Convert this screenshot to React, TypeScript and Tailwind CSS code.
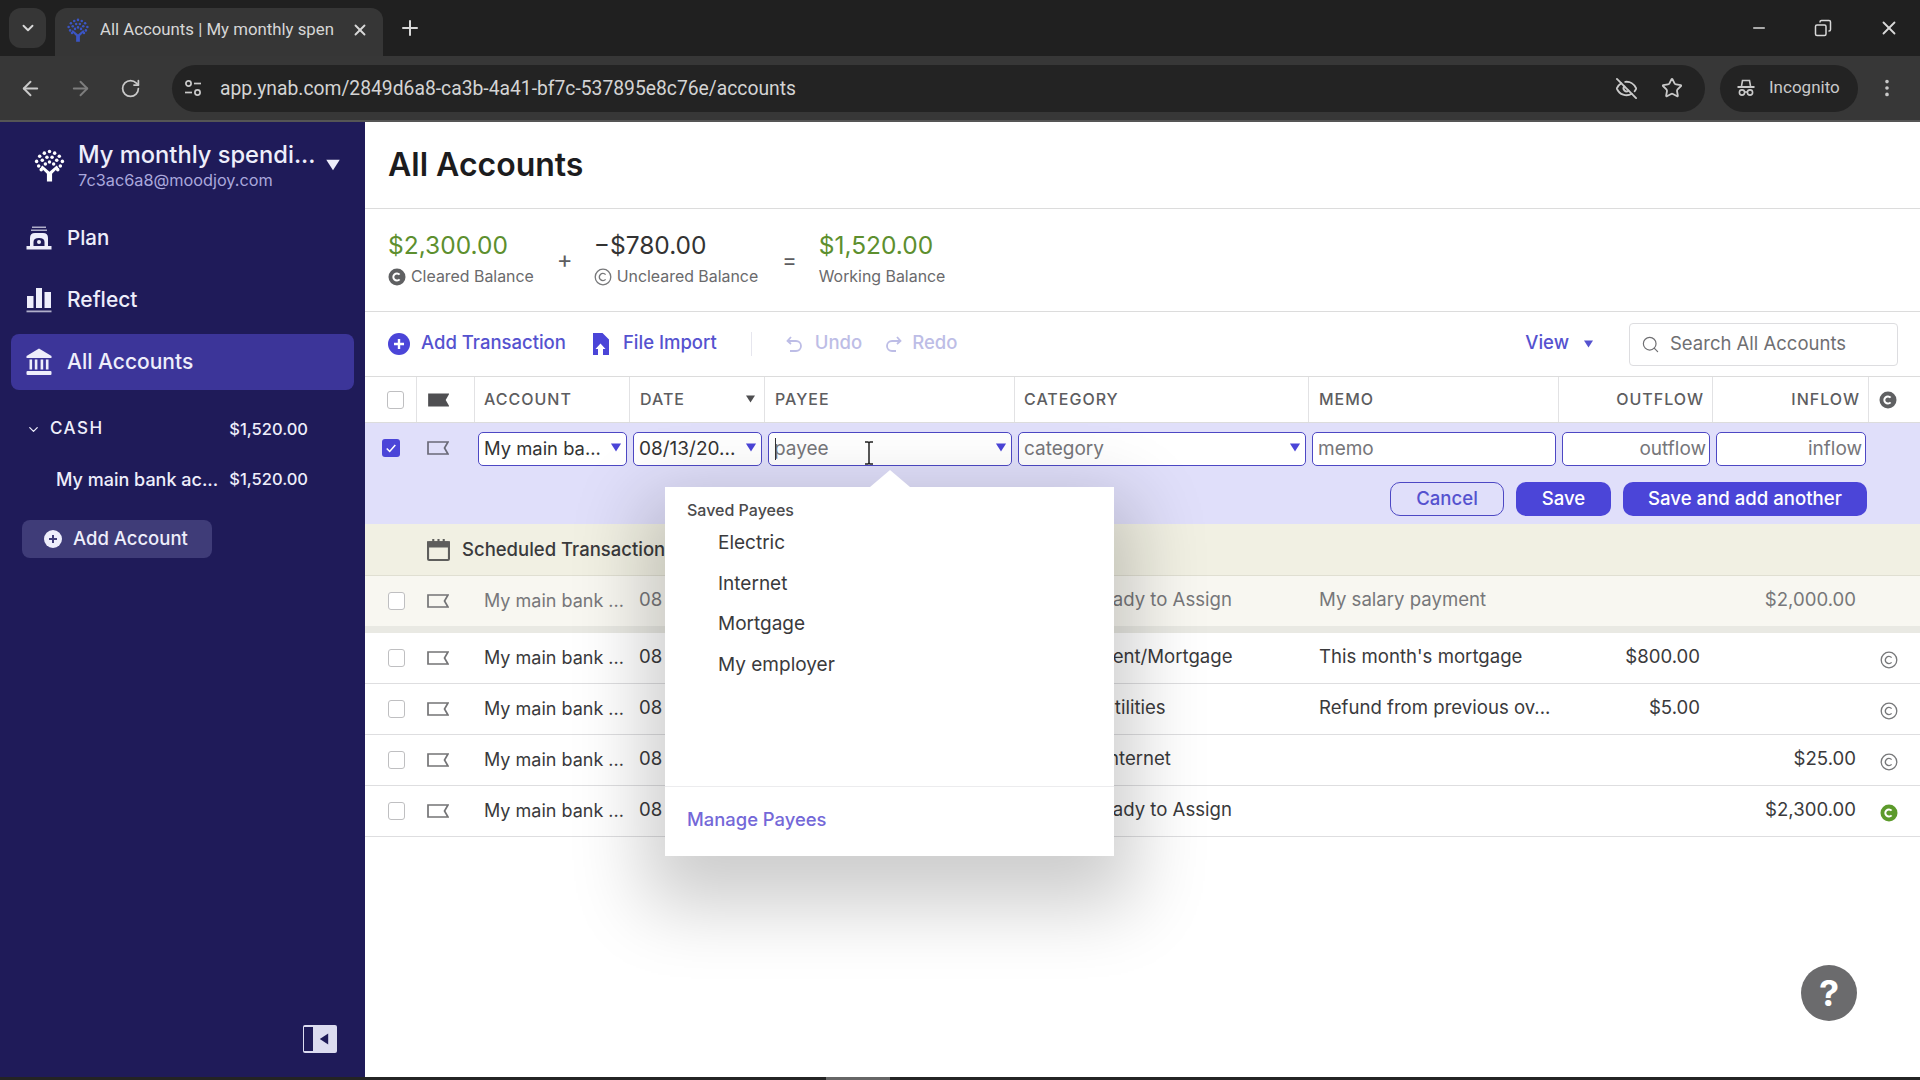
import React from 'react';
import { ArrowLeft, ArrowRight, ChevronDown, Copy, EyeOff, Minus, MoreVertical, Plus, RotateCw, Search, Star, X } from 'lucide-react';

const COLS = 'grid grid-cols-[52px_58px_155px_135px_250px_294px_250px_154px_156px_1fr]';

// tree mark, used in the sidebar and on the tab
function TreeLogo({ className }: { className?: string }) {
    const dots = [
        [16, 2.5], [11, 4], [21, 4], [6.5, 7], [25.5, 7], [13.5, 8], [18.5, 8], [9, 11], [23, 11],
        [3.5, 12], [28.5, 12], [16, 12.5], [12, 14.5], [20, 14.5], [5.5, 16.5], [26.5, 16.5], [8, 20], [24, 20],
    ];
    return (
        <svg viewBox="0 0 32 32" className={className} fill="currentColor">
            {dots.map(([cx, cy]) => (
                <circle key={`${cx}-${cy}`} cx={cx} cy={cy} r="1.7" />
            ))}
            <path d="M9 16 L16 22 L23 16 L24.5 18 L18.5 24 V31.5 H13.5 V24 L7.5 18 Z" />
        </svg>
    );
}

function PlanIcon() {
    return (
        <svg viewBox="0 0 26 24" className="h-6 w-[26px]" fill="currentColor">
            <rect x="6" y="0.5" width="14" height="1.5" opacity=".7" />
            <rect x="5" y="3.5" width="16" height="1.5" opacity=".7" />
            <path d="M4 20 V12 Q4 7 9 7 H17 Q22 7 22 12 V20 H18.5 V16 Q18.5 12 13 12 Q7.5 12 7.5 16 V20 Z" />
            <circle cx="13" cy="16" r="2" />
            <path d="M0.5 20 H25.5 V23.5 H0.5 Z" />
        </svg>
    );
}

function ReflectIcon() {
    return (
        <svg viewBox="0 0 26 26" className="h-[26px] w-[26px]" fill="currentColor">
            <rect x="1" y="9" width="6.5" height="12" />
            <rect x="10" y="1" width="6" height="20" />
            <rect x="18.5" y="5" width="6.5" height="16" />
            <rect x="0.5" y="23.5" width="25" height="1.8" opacity=".7" />
        </svg>
    );
}

function BankIcon() {
    return (
        <svg viewBox="0 0 26 28" className="h-7 w-[26px]" fill="currentColor">
            <path d="M13 0.5 L25.5 8 V10 H0.5 V8 Z" />
            <rect x="3.5" y="11.5" width="2.6" height="10" />
            <rect x="8.8" y="11.5" width="2.6" height="10" />
            <rect x="14.6" y="11.5" width="2.6" height="10" />
            <rect x="19.9" y="11.5" width="2.6" height="10" />
            <rect x="0.5" y="23" width="25" height="4" rx="1" />
        </svg>
    );
}

function IncognitoIcon() {
    return (
        <svg viewBox="0 0 20 20" className="h-5 w-5" fill="none" stroke="currentColor" strokeWidth="1.6">
            <path d="M5.5 8 L6.5 2.5 H13.5 L14.5 8" />
            <path d="M1.5 9 H18.5" strokeWidth="2" />
            <circle cx="6" cy="14.5" r="2.6" />
            <circle cx="14" cy="14.5" r="2.6" />
            <path d="M8.6 14 H11.4" />
        </svg>
    );
}

// site controls chip in the address bar
function SiteControlsIcon() {
    return (
        <svg viewBox="0 0 18 18" className="h-[18px] w-[18px]" fill="none" stroke="currentColor" strokeWidth="1.7">
            <circle cx="4.5" cy="4.5" r="2.6" />
            <path d="M10 4.5 H17" />
            <path d="M1 13.5 H8" />
            <circle cx="13.5" cy="13.5" r="2.6" />
        </svg>
    );
}

function FlagIcon({ filled, className }: { filled?: boolean; className?: string }) {
    return (
        <svg viewBox="0 0 22 14" className={className ?? 'h-[14px] w-[22px]'}>
            <path
                d="M1 1 H21 L17.5 7 L21 13 H1 Z"
                fill={filled ? 'currentColor' : 'none'}
                stroke="currentColor"
                strokeWidth="1.7"
            />
        </svg>
    );
}

function ClearedIcon({ kind }: { kind: 'outline' | 'solid' | 'green' }) {
    const solid = kind !== 'outline';
    const color = kind === 'green' ? 'text-[#5c9a2b]' : kind === 'solid' ? 'text-[#5f6062]' : 'text-[#77787a]';
    return (
        <svg viewBox="0 0 18 18" className={`h-[18px] w-[18px] ${color}`} fill="none">
            <circle cx="9" cy="9" r={solid ? 8.5 : 7.8} fill={solid ? 'currentColor' : 'none'} stroke="currentColor" strokeWidth={solid ? 0 : 1.3} />
            <path
                d="M11.6 6.6 A3.6 3.6 0 1 0 11.6 11.4"
                stroke={solid ? '#fff' : 'currentColor'}
                strokeWidth={solid ? 2 : 1.4}
            />
        </svg>
    );
}

function Caret({ className }: { className: string }) {
    return (
        <svg viewBox="0 0 10 8" className={className} fill="currentColor">
            <path d="M0.5 0.5 H9.5 L5 7.5 Z" />
        </svg>
    );
}

function Checkbox() {
    return <div className="h-[18px] w-[17px] rounded-[3px] border border-[#bfbfc1] bg-white" />;
}

function BrowserChrome() {
    return (
        <>
            <div className="flex h-14 shrink-0 items-start bg-[#202020] pl-[9px] pt-2 text-[#d8d8d8]">
                <div className="flex h-10 w-[37px] items-center justify-center rounded-xl bg-[#363636]">
                    <ChevronDown className="h-[18px] w-[18px]" strokeWidth={2.5} />
                </div>
                <div className="ml-[9px] flex h-12 w-[328px] items-center rounded-t-xl bg-[#363636] pb-[5px] pl-[11px] pr-[14px]">
                    <TreeLogo className="h-6 w-6 text-[#3b55c4]" />
                    <span className="ml-[10px] w-[234px] overflow-hidden whitespace-nowrap text-[16.8px] text-[#d6d6d6] [font-family:Roboto,sans-serif]">
                        All Accounts | My monthly spen
                    </span>
                    <X className="ml-auto h-[18px] w-[18px]" strokeWidth={2.5} />
                </div>
                <Plus className="ml-[15px] mt-[8px] h-6 w-6" strokeWidth={2} />
                <div className="ml-auto flex h-10 items-center gap-[46px] pr-[20px]">
                    <Minus className="h-[18px] w-[18px]" />
                    <Copy className="h-[18px] w-[18px] -scale-x-100" />
                    <X className="h-[22px] w-[22px]" />
                </div>
            </div>
            <div className="flex h-[66px] shrink-0 items-center border-b-2 border-[#555] bg-[#373737] pl-[19px] text-[#c9c9c9]">
                <ArrowLeft className="h-[23px] w-[23px]" />
                <ArrowRight className="ml-[27px] h-[23px] w-[23px] text-[#7d7d7d]" />
                <RotateCw className="ml-[28px] h-[21px] w-[21px]" />
                <div className="ml-[31px] flex h-[47px] w-[1533px] items-center rounded-full bg-[#232323] pl-3 pr-[22px]">
                    <SiteControlsIcon />
                    <span className="ml-[18px] translate-y-px text-[19.3px] text-[#d4d4d4] [font-family:Roboto,sans-serif]">
                        app.ynab.com/2849d6a8-ca3b-4a41-bf7c-537895e8c76e/accounts
                    </span>
                    <EyeOff className="ml-auto h-[23px] w-[23px]" />
                    <Star className="ml-[23px] h-[22px] w-[22px]" />
                </div>
                <div className="ml-[15px] flex h-[47px] w-[138px] items-center gap-[13px] rounded-full bg-[#232323] pl-[16px] text-[17px] [font-family:Roboto,sans-serif]">
                    <IncognitoIcon />
                    Incognito
                </div>
                <MoreVertical className="ml-[18px] h-[22px] w-[22px]" />
            </div>
        </>
    );
}

function Sidebar() {
    return (
        <aside className="flex w-[365px] shrink-0 flex-col bg-[#1f1b59] text-[#eeeefb]">
            <div className="flex h-[88px] items-start pl-[33px] pt-[18px]">
                <TreeLogo className="mt-[9px] h-[33px] w-[33px] text-white" />
                <div className="ml-3 min-w-0">
                    <div className="text-[23.7px] font-medium leading-[30px] whitespace-nowrap">My monthly spendi...</div>
                    <div className="text-[16.3px] leading-5 text-[#aaa8dc]">7c3ac6a8@moodjoy.com</div>
                </div>
                <Caret className="ml-[9px] mt-[19px] h-[12px] w-[18px] text-[#eeeefb]" />
            </div>
            <nav className="flex flex-col">
                <div className="mx-[11px] flex h-[56px] items-center pl-[15px]">
                    <PlanIcon />
                    <span className="ml-[15px] text-[20.5px] font-medium">Plan</span>
                </div>
                <div className="mx-[11px] mt-[6px] flex h-[56px] items-center pl-[15px]">
                    <ReflectIcon />
                    <span className="ml-[15px] text-[21px] font-medium">Reflect</span>
                </div>
                <div className="mx-[11px] mt-[6px] flex h-[56px] items-center rounded-lg bg-[#3c3599] pl-[15px]">
                    <BankIcon />
                    <span className="ml-[15px] text-[21px] font-medium">All Accounts</span>
                </div>
            </nav>
            <div className="mt-[27px] flex h-6 items-center pl-[26px] pr-[57px]">
                <ChevronDown className="h-[15px] w-[15px]" />
                <span className="ml-[9px] text-[17px] font-medium tracking-[1.5px]">CASH</span>
                <span className="ml-auto text-[16.5px] font-medium">$1,520.00</span>
            </div>
            <div className="mt-[26px] flex h-6 items-center pl-[56px] pr-[57px]">
                <span className="text-[18px] font-medium whitespace-nowrap">My main bank ac...</span>
                <span className="ml-auto text-[16.5px] font-medium">$1,520.00</span>
            </div>
            <div className="ml-[22px] mt-[29px] flex h-[38px] w-[190px] items-center rounded-lg bg-[#3f3c78] pl-[22px]">
                <svg viewBox="0 0 18 18" className="h-[18px] w-[18px]">
                    <circle cx="9" cy="9" r="9" fill="#eeeefb" />
                    <path d="M9 5 V13 M5 9 H13" stroke="#3f3c78" strokeWidth="2" />
                </svg>
                <span className="ml-[11px] text-[18.5px] font-medium">Add Account</span>
            </div>
            <div className="mb-[24px] ml-[303px] mt-auto flex h-7 w-[34px] items-center rounded-[2px] bg-[#dcdcf0]">
                <div className="ml-[1px] h-6 w-[9px] bg-[#1f1b59]" />
                <Caret className="ml-[5px] h-[12px] w-[12px] rotate-90 text-[#1f1b59]" />
            </div>
        </aside>
    );
}

function Balance({ amount, label, color, icon }: { amount: string; label: string; color: string; icon?: 'solid' | 'outline' }) {
    return (
        <div className="-mt-[2px]">
            <div className={`-mt-px pb-px text-[24.5px] leading-[30px] ${color}`}>{amount}</div>
            <div className="mt-[6px] flex items-center gap-[5px] text-[15.9px] leading-5 text-[#6a6a6c]">
                {icon && <ClearedIcon kind={icon} />}
                {label}
            </div>
        </div>
    );
}

function Toolbar() {
    return (
        <div className="flex h-[65px] items-center border-b border-[#dcdcdc] pl-[23px] pr-[22px]">
            <svg viewBox="0 0 22 22" className="h-[22px] w-[22px]">
                <circle cx="11" cy="11" r="11" fill="#4b45d8" />
                <path d="M11 6 V16 M6 11 H16" stroke="#fff" strokeWidth="2.4" />
            </svg>
            <span className="ml-[11px] -translate-y-px text-[18.5px] font-medium text-[#5552cf]">Add Transaction</span>
            <svg viewBox="0 0 17 22" className="ml-[26px] h-[22px] w-[17px]" fill="#4b45d8">
                <path d="M1 0 H10.5 L17 6.5 V22 H11 V16 H13.5 L8.5 10.5 L3.5 16 H6 V22 H1 Z" />
            </svg>
            <span className="ml-[14px] -translate-y-px text-[18.5px] font-medium text-[#5552cf]">File Import</span>
            <div className="ml-[34px] h-6 w-px bg-[#e6e6ee]" />
            <svg viewBox="0 0 18 20" className="ml-[33px] h-5 w-[18px]" fill="none" stroke="#bdbde6" strokeWidth="1.8">
                <path d="M3 7 H11 A5 5 0 0 1 11 17 H5" />
                <path d="M6 3 L2.5 7 L6 10" />
            </svg>
            <span className="ml-[12px] -translate-y-px text-[18.5px] font-medium text-[#bdbde6]">Undo</span>
            <svg viewBox="0 0 18 20" className="ml-[23px] h-5 w-[18px]" fill="none" stroke="#bdbde6" strokeWidth="1.8">
                <path d="M15 7 H7 A5 5 0 0 0 7 17 H11" />
                <path d="M12 3 L15.5 7 L12 10" />
            </svg>
            <span className="ml-[9px] -translate-y-px text-[18.5px] font-medium text-[#bdbde6]">Redo</span>
            <span className="ml-auto -translate-y-px text-[18.5px] font-medium text-[#5552cf]">View</span>
            <Caret className="ml-[14px] h-2 w-[11px] text-[#5552cf]" />
            <div className="ml-[35px] flex h-[43px] w-[269px] items-center rounded-[4px] border border-[#dddde0] pl-[11px] text-[#6f6f72]">
                <Search className="h-[19px] w-[19px]" strokeWidth={1.5} />
                <span className="ml-[10px] text-[18.5px]">Search All Accounts</span>
            </div>
        </div>
    );
}

function HeaderCell({ label, right, tight }: { label: string; right?: boolean; tight?: boolean }) {
    return (
        <div
            className={`flex items-center border-r border-[#e2e2e4] pb-[2px] pr-2 text-[16px] font-medium tracking-[1px] text-[#5d5d60] ${tight ? 'pl-[9px]' : 'pl-[10px]'} ${right ? 'justify-end' : ''}`}
        >
            {label}
            {label === 'DATE' && <Caret className="ml-auto h-2 w-[11px] text-[#4e4e50]" />}
        </div>
    );
}

function TableHeader() {
    return (
        <div className={`${COLS} h-[46px] border-b border-[#dcdcdc]`}>
            <div className="flex items-center border-r border-[#e2e2e4] pl-[22px]">
                <Checkbox />
            </div>
            <div className="flex items-center border-r border-[#e2e2e4] pl-[11px]">
                <FlagIcon filled className="h-[14px] w-[21px] text-[#4f4f52]" />
            </div>
            <HeaderCell label="ACCOUNT" tight />
            <HeaderCell label="DATE" />
            <HeaderCell label="PAYEE" />
            <HeaderCell label="CATEGORY" tight />
            <HeaderCell label="MEMO" />
            <HeaderCell label="OUTFLOW" right />
            <HeaderCell label="INFLOW" right />
            <div className="flex items-center pl-[10px]">
                <ClearedIcon kind="solid" />
            </div>
        </div>
    );
}

function EditField({ text, right, caret, placeholder, size }: { text: string; right?: boolean; caret?: boolean; placeholder?: boolean; size?: string }) {
    return (
        <div
            className={`mx-[3px] flex h-[34px] items-center rounded-[5px] border-[1.5px] border-[#4d48c4] bg-white pl-[5px] pr-[3px] whitespace-nowrap ${size ?? 'text-[19px]'} ${right ? 'justify-end' : ''} ${placeholder ? 'text-[#76767a]' : 'text-[#333]'}`}
        >
            <span className="overflow-hidden">{text}</span>
            {caret && <Caret className="ml-auto mr-[1px] h-[9px] w-[12px] shrink-0 -translate-y-[2px] text-[#4b45d8]" />}
        </div>
    );
}

function EditRow() {
    return (
        <div className="h-[101px] bg-[#e0dffa]">
            <div className={`${COLS} pt-[9px]`}>
                <div className="pl-[17px] pt-[7px]">
                    <div className="flex h-[18px] w-[18px] items-center justify-center rounded-[3px] bg-[#4b45d8]">
                        <svg viewBox="0 0 14 14" className="h-3 w-3" fill="none" stroke="#fff" strokeWidth="1.8">
                            <path d="M2 7.5 L5.5 11 L12 3.5" />
                        </svg>
                    </div>
                </div>
                <div className="pl-[10px] pt-[9px]">
                    <FlagIcon className="h-[14px] w-[22px] text-[#6a6a78]" />
                </div>
                <EditField text="My main ba..." caret size="text-[18.4px]" />
                <EditField text="08/13/20..." caret />
                <div className="relative">
                    <EditField text="payee" caret placeholder />
                    <div className="absolute left-[10px] top-[6px] h-[22px] w-px bg-[#333]" />
                    {/* mouse pointer */}
                    <svg viewBox="0 0 10 24" className="absolute left-[99px] top-[9px] h-6 w-[10px]" fill="none" stroke="#222" strokeWidth="1.5">
                        <path d="M1 1 H4 L5 2 L6 1 H9 M5 2 V22 M1 23 H4 L5 22 L6 23 H9" />
                    </svg>
                </div>
                <EditField text="category" caret placeholder />
                <EditField text="memo" placeholder />
                <EditField text="outflow" right placeholder />
                <EditField text="inflow" right placeholder />
            </div>
            <div className="mr-[53px] mt-[16px] flex justify-end gap-3 text-[18.6px] font-medium">
                <div className="flex h-[34px] w-[114px] items-center justify-center rounded-[10px] border border-[#4d48c4] text-[#5552cf]">Cancel</div>
                <div className="flex h-[34px] w-[95px] items-center justify-center rounded-[10px] bg-[#4b45d8] text-white">Save</div>
                <div className="flex h-[34px] w-[244px] items-center justify-center rounded-[10px] bg-[#4b45d8] text-white">Save and add another</div>
            </div>
        </div>
    );
}

type Row = {
    category: string;
    categoryPad: string;
    memo?: string;
    outflow?: string;
    inflow?: string;
    cleared?: 'outline' | 'green';
    scheduled?: boolean;
};

const rows: Row[] = [
    { category: 'Ready to Assign', categoryPad: 'pl-[75px]', memo: 'My salary payment', inflow: '$2,000.00', scheduled: true },
    { category: 'Rent/Mortgage', categoryPad: 'pl-[86px]', memo: "This month's mortgage", outflow: '$800.00', cleared: 'outline' },
    { category: 'Utilities', categoryPad: 'pl-[86px]', memo: 'Refund from previous ov...', outflow: '$5.00', cleared: 'outline' },
    { category: 'Internet', categoryPad: 'pl-[88px]', inflow: '$25.00', cleared: 'outline' },
    { category: 'Ready to Assign', categoryPad: 'pl-[75px]', inflow: '$2,300.00', cleared: 'green' },
];

function TxRow({ row }: { row: Row }) {
    const tone = row.scheduled
        ? 'h-[50px] border-b-[7px] border-[#e9e9e3] bg-[#f8f7f1] text-[#77777a] box-content'
        : 'h-[50px] border-b border-[#dedee0] text-[#3a3a3c] box-content';
    return (
        <div className={`${COLS} ${tone} items-center text-[18.6px]`}>
            <div className="pl-[23px]">
                <Checkbox />
            </div>
            <div className="pl-[10px]">
                <FlagIcon className="h-[14px] w-[22px] text-[#747476]" />
            </div>
            <div className="-translate-y-px pl-[9px] text-[18px] whitespace-nowrap">My main bank ...</div>
            <div className="-translate-y-px pl-[9px]">08</div>
            <div />
            <div className={`-translate-y-px whitespace-nowrap ${row.categoryPad}`}>{row.category}</div>
            <div className="-translate-y-px pl-[10px] whitespace-nowrap">{row.memo}</div>
            <div className="-translate-y-px pr-[13px] text-right">{row.outflow}</div>
            <div className="-translate-y-px pr-[13px] text-right">{row.inflow}</div>
            <div className="pl-[11px] pt-1">{row.cleared && <ClearedIcon kind={row.cleared} />}</div>
        </div>
    );
}

function PayeePopup() {
    return (
        <div className="absolute left-[300px] top-[365px] flex h-[369px] w-[449px] flex-col bg-white shadow-[0_30px_70px_20px_rgba(0,0,0,0.2)]">
            <div className="absolute left-[205px] top-[-17px] h-0 w-0 border-x-[20px] border-b-[17px] border-x-transparent border-b-white" />
            <div className="ml-[22px] mt-[13px] text-[16px] font-medium leading-5 text-[#4a4a4c]">Saved Payees</div>
            <div className="ml-[53px] mt-[11px] flex flex-col gap-[16.5px] text-[19px] leading-6 text-[#3a3a3c]">
                <div>Electric</div>
                <div>Internet</div>
                <div>Mortgage</div>
                <div>My employer</div>
            </div>
            <div className="mt-auto flex h-[70px] items-center border-t border-[#ececee] pb-[3px] pl-[22px] text-[18.4px] font-medium text-[#7468d8]">
                Manage Payees
            </div>
        </div>
    );
}

export default function App() {
    return (
        <div className="flex h-screen w-full flex-col overflow-hidden bg-white [font-family:Inter,'Noto_Sans',sans-serif]">
            <BrowserChrome />
            <div className="flex min-h-0 flex-1">
                <Sidebar />
                <main className="relative min-w-0 flex-1">
                    <header className="flex h-[87px] items-center border-b border-[#dcdcdc] pl-[23px]">
                        <h1 className="text-[32px] font-semibold text-[#1c1c1e]">All Accounts</h1>
                    </header>
                    <div className="flex h-[103px] items-center border-b border-[#dcdcdc] pl-[23px]">
                        <Balance amount="$2,300.00" label="Cleared Balance" color="text-[#5d8f2e]" icon="solid" />
                        <span className="ml-[23px] mr-[21px] text-[24px] text-[#5d5d60]">+</span>
                        <Balance amount="−$780.00" label="Uncleared Balance" color="text-[#333]" icon="outline" />
                        <span className="ml-[24px] mr-[22px] text-[22px] text-[#5d5d60]">=</span>
                        <Balance amount="$1,520.00" label="Working Balance" color="text-[#5d8f2e]" />
                    </div>
                    <Toolbar />
                    <TableHeader />
                    <EditRow />
                    <div className="flex h-[52px] items-center border-b border-[#e0dfd2] bg-[#f1f0e3] pl-[62px]">
                        <svg viewBox="0 0 22 22" className="h-[23px] w-[23px]" fill="none" stroke="#5e5e5c" strokeWidth="2">
                            <rect x="1" y="4" width="20" height="17" rx="1" />
                            <path d="M1 4 H21 V8 H1 Z" fill="#5e5e5c" />
                            <path d="M6 1 V4 M16 1 V4 M11 1 V4" />
                        </svg>
                        <span className="ml-3 text-[18.5px] font-medium whitespace-nowrap text-[#3a3a3c]">Scheduled Transaction</span>
                    </div>
                    {rows.map((row, i) => (
                        <TxRow key={i} row={row} />
                    ))}
                    <PayeePopup />
                    <div className="absolute bottom-[56px] right-[63px] flex h-14 w-14 items-center justify-center rounded-full bg-[#6b6b6d] text-[36px] font-bold text-white">
                        ?
                    </div>
                </main>
            </div>
            <div className="flex h-[3px] shrink-0 bg-[#242424]">
                <div className="ml-[826px] h-full w-[64px] bg-[#666]" />
            </div>
        </div>
    );
}
